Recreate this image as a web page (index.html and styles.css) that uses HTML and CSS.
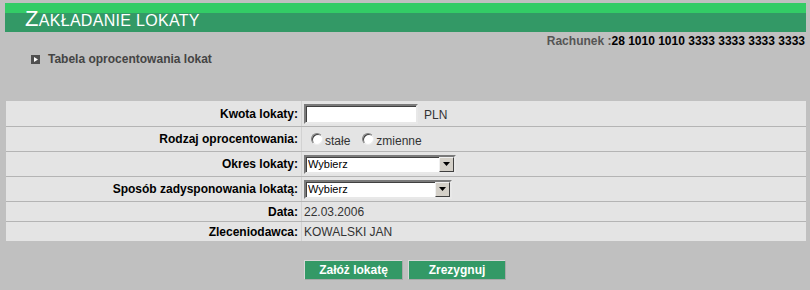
FILE: index.html
```html
<!DOCTYPE html>
<html lang="pl">
<head>
    <meta charset="UTF-8">
    <title>Zakładanie lokaty</title>
    <link rel="stylesheet" href="styles.css">
</head>
<body>
    <div class="header">
        <h1 class="title"><span class="title-cap">Z</span>akładanie lokaty</h1>
    </div>

    <div class="account">
        <span class="account-label">Rachunek :</span><span class="account-no">28 1010 1010 3333 3333 3333 3333</span>
    </div>

    <a class="link" href="#">
        <svg class="bullet" width="9" height="9" viewBox="0 0 9 9">
            <rect width="9" height="9" fill="#505050"/>
            <polygon points="3,2 7,4.5 3,7" fill="#fff"/>
        </svg>
        Tabela oprocentowania lokat
    </a>

    <div class="form">
        <div class="row row-input">
            <div class="label">Kwota lokaty:</div>
            <div class="value">
                <input class="text-input" type="text">
                <span class="unit">PLN</span>
            </div>
        </div>
        <div class="row row-input">
            <div class="label">Rodzaj oprocentowania:</div>
            <div class="value">
                <label class="radio"><input type="radio" name="rodzaj"> stałe</label>
                <label class="radio"><input type="radio" name="rodzaj">zmienne</label>
            </div>
        </div>
        <div class="row row-input">
            <div class="label">Okres lokaty:</div>
            <div class="value">
                <div class="select select-wide">
                    <select><option>Wybierz</option></select>
                    <span class="select-arrow"><svg width="7" height="4" viewBox="0 0 7 4"><polygon points="0,0 7,0 3.5,4" fill="#000"/></svg></span>
                </div>
            </div>
        </div>
        <div class="row row-input">
            <div class="label">Sposób zadysponowania lokatą:</div>
            <div class="value">
                <div class="select">
                    <select><option>Wybierz</option></select>
                    <span class="select-arrow"><svg width="7" height="4" viewBox="0 0 7 4"><polygon points="0,0 7,0 3.5,4" fill="#000"/></svg></span>
                </div>
            </div>
        </div>
        <div class="row">
            <div class="label">Data:</div>
            <div class="value">22.03.2006</div>
        </div>
        <div class="row row-last">
            <div class="label">Zleceniodawca:</div>
            <div class="value">KOWALSKI JAN</div>
        </div>
    </div>

    <div class="actions">
        <button class="btn btn-ok">Załóż lokatę</button>
        <button class="btn btn-cancel">Zrezygnuj</button>
    </div>
</body>
</html>
```

FILE: styles.css
```css
* {
    margin: 0;
    padding: 0;
    box-sizing: border-box;
}

body {
    background: #c0c0c0;
    font-family: 'Liberation Sans', Arial, sans-serif;
    font-size: 12px;
    color: #333;
    padding-top: 3px;
}

/* Naglowek */
.header {
    margin: 0 4px 0 5px;
    height: 29px;
    background: linear-gradient(#33cc66 0, #33cc66 10px, #339966 10px);
}

.title {
    padding-left: 20px;
    color: #fff;
    font-weight: normal;
    font-size: 16px;
    line-height: 29px;
    text-transform: uppercase;
    height: 29px;
    padding-top: 1px;
    letter-spacing: 0.3px;
}

.title-cap {
    font-size: 22px;
}

/* Rachunek */
.account {
    margin-top: 2px;
    padding-right: 5px;
    text-align: right;
    line-height: 14px;
    font-weight: bold;
}

.account-label {
    color: #555;
}

.account-no {
    color: #000;
}

.link {
    display: flex;
    align-items: center;
    gap: 8px;
    margin: 4px 0 0 31px;
    line-height: 14px;
    font-weight: bold;
    color: #444;
    text-decoration: none;
}

/* Formularz */
.form {
    margin: 35px 4px 0 6px;
    background: #e4e4e4;
}

.row {
    display: grid;
    grid-template-columns: 295px 1fr;
    height: 20px;
    border-bottom: 1px solid #b4b4b4;
}

.row-input {
    height: 25px;
}

.row:first-child {
    height: 26px;
}

.row-last {
    height: 19px;
    border-bottom: none;
}

.label {
    display: flex;
    align-items: center;
    justify-content: flex-end;
    padding-right: 3px;
    font-weight: bold;
    color: #000;
}

.value {
    display: flex;
    align-items: center;
    padding-left: 2px;
    border-left: 1px solid #d2d2d2;
    color: #333;
}

.text-input {
    width: 114px;
    height: 20px;
    margin-top: 1px;
    background: #fff;
    border: 2px solid;
    border-color: #7a7a7a #e8e8e8 #e8e8e8 #7a7a7a;
    box-shadow: inset 1px 1px 0 #404040;
}

.unit {
    margin-left: 6px;
    margin-top: 2px;
}

.radio {
    display: flex;
    align-items: center;
    margin-top: 3px;
}

.radio:first-child {
    margin-left: 7px;
    margin-right: 12px;
}

.radio input {
    appearance: none;
    width: 12px;
    height: 12px;
    margin-right: 2px;
    margin-top: -3px;
    border-radius: 50%;
    background: #fff;
    border: 1px solid;
    border-color: #808080 #ececec #ececec #808080;
    box-shadow: inset 1px 1px 0 #404040;
}

.select {
    position: relative;
    width: 148px;
    height: 19px;
}

.select-wide {
    width: 152px;
}

.select select {
    appearance: none;
    width: 100%;
    height: 100%;
    padding-left: 2px;
    background: #fff;
    border: 2px solid;
    border-color: #7a7a7a #e8e8e8 #e8e8e8 #7a7a7a;
    box-shadow: inset 1px 1px 0 #404040;
    font-family: 'Liberation Sans', Arial, sans-serif;
    font-size: 11px;
    color: #000;
    outline: none;
}

.select-arrow {
    position: absolute;
    top: 2px;
    right: 2px;
    width: 15px;
    height: 15px;
    display: flex;
    align-items: center;
    justify-content: center;
    background: #d4d0c8;
    border: 1px solid;
    border-color: #f0f0f0 #404040 #404040 #f0f0f0;
}

/* Przyciski */
.actions {
    display: flex;
    justify-content: center;
    gap: 5px;
    margin-top: 19px;
}

.btn {
    height: 20px;
    background: #339966;
    color: #fff;
    font-family: 'Liberation Sans', Arial, sans-serif;
    font-size: 12px;
    font-weight: bold;
    border: 1px solid;
    border-color: #d8d8d8 #a8a8a8 #a8a8a8 #d8d8d8;
    cursor: pointer;
}

.btn-ok {
    width: 99px;
}

.btn-cancel {
    width: 98px;
}
```
